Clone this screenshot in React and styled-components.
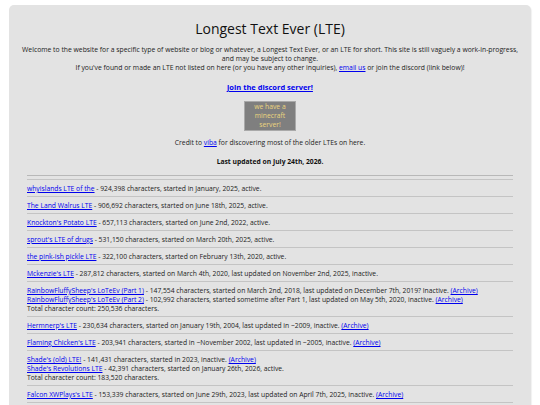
import React from 'react'
import styled, { createGlobalStyle } from 'styled-components'

const entries = [
  { lines: [{ name: 'whyislands LTE of the', text: ' - 924,398 characters, started in January, 2025, active.' }] },
  { lines: [{ name: 'The Land Walrus LTE', text: ' - 906,692 characters, started on June 18th, 2025, active.' }] },
  { lines: [{ name: "Knockton's Potato LTE", text: ' - 657,113 characters, started on June 2nd, 2022, active.' }] },
  { lines: [{ name: "sprout's LTE of drugs", text: ' - 531,150 characters, started on March 20th, 2025, active.' }] },
  { lines: [{ name: 'the pink-ish pickle LTE', text: ' - 322,100 characters, started on February 13th, 2020, active.' }] },
  { lines: [{ name: "Mckenzie's LTE", text: ' - 287,812 characters, started on March 4th, 2020, last updated on November 2nd, 2025, inactive.' }] },
  {
    lines: [
      { name: "RainbowFluffySheep's LoTeEv (Part 1)", text: ' - 147,554 characters, started on March 2nd, 2018, last updated on December 7th, 2019? Inactive. ', archive: true },
      { name: "RainbowFluffySheep's LoTeEv (Part 2)", text: ' - 102,992 characters, started sometime after Part 1, last updated on May 5th, 2020, inactive. ', archive: true },
    ],
    total: '250,536',
  },
  { lines: [{ name: "Hermnerp's LTE", text: ' - 230,634 characters, started on January 19th, 2004, last updated in ~2009, inactive. ', archive: true }] },
  { lines: [{ name: "Flaming Chicken's LTE", text: ' - 203,941 characters, started in ~November 2002, last updated in ~2005, inactive. ', archive: true }] },
  {
    lines: [
      { name: "Shade's (old) LTE!", text: ' - 141,431 characters, started in 2023, inactive. ', archive: true },
      { name: "Shade's Revolutions LTE", text: ' - 42,391 characters, started on January 26th, 2026, active.' },
    ],
    total: '183,520',
  },
  { lines: [{ name: "Falcon XWPlays's LTE", text: ' - 153,339 characters, started on June 29th, 2023, last updated on April 7th, 2025, inactive. ', archive: true }] },
]

export default function App() {
  return (
    <>
      <GlobalStyle />
      <Card>
        <Header>
          <Title>Longest Text Ever (LTE)</Title>
          <Intro>
            Welcome to the website for a specific type of website or blog or whatever, a Longest Text Ever, or an LTE for short. This site is still vaguely a work-in-progress,
            <br />
            and may be subject to change.
            <br />
            If you've found or made an LTE not listed on here (or you have any other inquiries), <Link href="#">email us</Link> or join the discord (link below)!
          </Intro>
          <Discord href="#">join the discord server!</Discord>
          <Minecraft>
            we have a
            <br />
            minecraft
            <br />
            server!
          </Minecraft>
          <Credit>
            Credit to <Link href="#">viba</Link> for discovering most of the older LTEs on here.
          </Credit>
          <Updated>Last updated on July 24th, 2026.</Updated>
        </Header>
        <List>
          {entries.map((entry, i) => (
            <Entry key={i}>
              {entry.lines.map((line, j) => (
                <Line key={j}>
                  <Link href="#">{line.name}</Link>
                  {line.text}
                  {line.archive && <Link href="#">(Archive)</Link>}
                </Line>
              ))}
              {entry.total && <Line>Total character count: {entry.total} characters.</Line>}
            </Entry>
          ))}
        </List>
      </Card>
    </>
  )
}

const GlobalStyle = createGlobalStyle`
  body {
    margin: 0;
    background: #ffffff;
    font-family: "Open Sans", "Noto Sans", sans-serif;
    color: #222222;
  }
`

const Card = styled.main`
  margin: 5px 9px;
  background: #e3e3e3;
  border-radius: 5px;
  box-shadow: 1px 1px 1px rgba(0, 0, 0, 0.06);
  padding: 14px 0 20px;
`

const Header = styled.header`
  display: flex;
  flex-direction: column;
  align-items: center;
  text-align: center;
`

const Title = styled.h1`
  margin: 0;
  font-size: 14px;
  line-height: 20px;
  font-weight: 400;
  color: #111111;
`

const Intro = styled.p`
  margin: 6px 0 0;
  font-size: 6.8px;
  line-height: 9px;
  white-space: nowrap;
`

const Link = styled.a`
  color: #0000ee;
  text-decoration: underline;
`

const Discord = styled.a`
  margin-top: 10px;
  font-size: 7.5px;
  line-height: 10px;
  font-weight: 700;
  color: #0000ee;
  text-decoration: underline;
`

const Minecraft = styled.div`
  margin-top: 9px;
  width: 50px;
  background: #7f7f7f;
  border: 1px solid #a9a9a9;
  color: #ecd67e;
  font-size: 6.75px;
  line-height: 9px;
  padding: 0 0 1px;
`

const Credit = styled.p`
  margin: 7px 0 0;
  font-size: 6.75px;
  line-height: 9px;
`

const Updated = styled.p`
  margin: 10px 0 0;
  font-size: 6.75px;
  line-height: 9px;
  font-weight: 700;
  color: #111111;
`

const List = styled.section`
  margin: 9px 18px 0;
  border-top: 1px solid #b8b8b8;
  padding-top: 3px;
`

const Entry = styled.div`
  border-top: 1px solid #c4c4c4;
  padding: 4px 0 3px;
  &:last-child {
    border-bottom: 1px solid #c4c4c4;
  }
`

const Line = styled.div`
  font-size: 6.75px;
  line-height: 9px;
  white-space: nowrap;
`
